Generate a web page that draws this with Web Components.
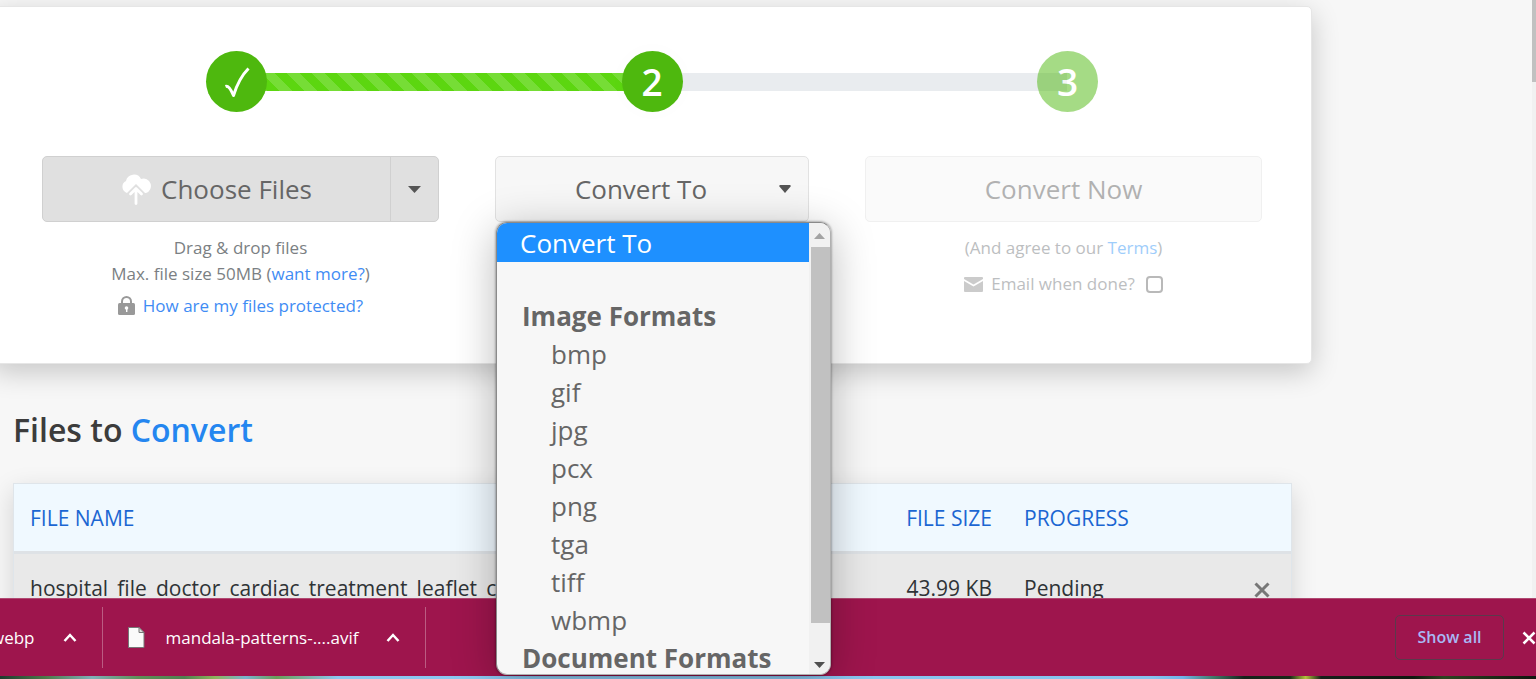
<!DOCTYPE html>
<html lang="en">
<head>
<meta charset="utf-8">
<title>File conversion</title>
<style>
  html, body { margin: 0; height: 100%; overflow: hidden; }
  body { background: #f7f7f7; font-family: "Open Sans", "Noto Sans", sans-serif; color: #333; }
</style>
</head>
<body>
<app-window>
  <convert-card>
    <progress-steps></progress-steps>
    <choose-files></choose-files>
    <format-picker></format-picker>
    <convert-now></convert-now>
  </convert-card>
  <file-list></file-list>
  <download-shelf slot="shelf">
    <download-item first>webp</download-item>
    <download-item>mandala-patterns-....avif</download-item>
  </download-shelf>
</app-window>

<script>
const define = (name, html) => customElements.define(name, class extends HTMLElement {
  constructor() {
    super();
    this.attachShadow({ mode: "open" }).innerHTML = html;
  }
});

define("app-window", `
<style>
  :host { display: flex; flex-direction: column; height: 100vh; }
  .view { flex: 1; min-height: 0; display: flex; }
  main { flex: 1; min-width: 0; padding: 6px 220px 0 0; }
  .track { width: 4px; background: #f1f1f1; }
  .thumb { height: 82px; background: #c1c1c1; }
  .desk { position: relative; z-index: 2; height: 3px; flex: none;
    background: linear-gradient(90deg, #1d3a2e 0, #4d7a4a 3%, #7fb0b8 6%, #5d8f57 9%, #4f8050 12%, #8fb45c 14%, #78b4cf 16%, #6a9d58 18%, #8cc8f0 22%, #86c4ee 75%, #6fb5e8 77%, #3f7a68 79%, #14221a 81%, #1a2a18 84%, #b3c23c 85%, #16201a 86%, #10180f 92%, #2c4420 94%, #0f160e 100%); }
</style>
<div class="view"><main><slot></slot></main><div class="track"><div class="thumb"></div></div></div>
<slot name="shelf"></slot>
<div class="desk"></div>`);

define("convert-card", `
<style>
  :host { display: grid; grid-template-columns: 397fr 314fr 397fr; column-gap: 56px; align-items: start; align-content: start;
    box-sizing: border-box; min-height: 358px; margin-left: -8px; padding: 44px 49px 0; background: #fff;
    border: 1px solid #e6e6e6; border-radius: 5px; box-shadow: 0 8px 28px rgba(0,0,0,.2); }
  ::slotted(progress-steps) { grid-column: 1 / -1; margin-bottom: 44px; }
</style>
<slot></slot>`);

define("progress-steps", `
<style>
  :host { display: flex; align-items: center; padding: 0 164px; }
  .dot { position: relative; z-index: 1; flex: none; width: 61px; height: 61px; border-radius: 50%; background: #4eb80e;
    color: #fff; font-size: 37px; font-weight: 600; display: grid; place-items: center; line-height: 61px; }
  .halo { box-shadow: 0 0 20px rgba(0,0,0,.02); }
  .todo { opacity: .5; }
  .bar { flex: 1; height: 18px; margin: 0 -30px; background: #e9ecef; }
  .full { background: linear-gradient(45deg, rgba(255,255,255,.16) 25%, transparent 25% 50%, rgba(255,255,255,.16) 50% 75%, transparent 75%) 0 0 / 25px 25px #5cd610; }
</style>
<div class="dot"><svg width="26" height="32" viewBox="0 0 26 32" fill="none" stroke="#fff" stroke-width="3" stroke-linejoin="round" aria-label="Done"><path d="M1.500 20.500Q5 19 9.500 29.500Q15 12 24.500 2.500"/></svg></div>
<div class="bar full"></div>
<div class="dot halo">2</div>
<div class="bar"></div>
<div class="dot todo">3</div>`);

define("choose-files", `
<style>
  :host { display: block; text-align: center; font-size: 17px; line-height: 26px; color: #7b7f83; }
  .group { display: flex; box-sizing: border-box; height: 66px; border: 1px solid #d0d0d0; border-radius: 5px; background: #e0e0e0; margin-bottom: 13px; }
  button { font: inherit; font-size: 26px; color: #666; border: 0; background: none; padding: 0; display: flex; align-items: center; justify-content: center; }
  .main { flex: 1; gap: 10px; }
  .more { width: 48px; border-left: 1px solid #d0d0d0; }
  p { margin: 0; }
  .safe { display: flex; justify-content: center; align-items: center; gap: 8px; margin-top: 6px; }
  a { color: #3f8cf4; text-decoration: none; }
</style>
<div class="group">
  <button class="main"><svg width="30" height="32" viewBox="0 0 30 32"><path d="M6 20A6.500 6.500 0 0 1 5 8A8 8 0 0 1 20 6A7.200 7.200 0 0 1 25 20Z" fill="#fff"/><path d="M6.500 22V19.500L15 11L23.500 19.500V22Z" fill="#e0e0e0"/><path d="M15 30.500V16M9.500 21L15 15.500L20.500 21" fill="none" stroke="#fff" stroke-width="2.800" stroke-linecap="round" stroke-linejoin="round"/></svg>Choose Files</button>
  <button class="more" aria-label="More sources"><svg width="13" height="7" viewBox="0 0 13 7"><path d="M0 0H13L6.500 7Z" fill="#555"/></svg></button>
</div>
<p>Drag &amp; drop files</p>
<p>Max. file size 50MB (<a href="#more">want more?</a>)</p>
<p class="safe"><svg width="17" height="20" viewBox="0 0 17 20"><path d="M4 9V5.500a4.500 4.500 0 0 1 9 0V9" fill="none" stroke="#999" stroke-width="2"/><rect y="7" width="17" height="12" rx="1.500" fill="#999"/><circle cx="8.500" cy="12" r="1.800" fill="#fff"/><path d="M8 12h1.400v4H8z" fill="#fff"/></svg><a href="#safe">How are my files protected?</a></p>`);

define("format-picker", `
<style>
  :host { display: block; position: relative; font-size: 26px; color: #666; }
  .box { display: grid; grid-template: 66px / 1fr; align-items: center; }
  select, .box svg { grid-area: 1 / 1; }
  select { appearance: none; width: 100%; height: 66px; border: 1px solid #e2e2e2; border-radius: 5px; background: #f7f7f7;
    font: inherit; color: inherit; padding: 0 22px 0 0; text-align: center; text-align-last: center; }
  .box svg { justify-self: end; margin-right: 18px; pointer-events: none; }
  .popup { position: absolute; z-index: 3; top: 66px; left: 1px; box-sizing: border-box; width: calc(100% + 21px); height: 453px;
    display: flex; overflow: hidden; background: #f7f7f7; border: 1px solid; border-color: #8a8a8a #b0b0b0 #b0b0b0 #8a8a8a; border-radius: 11px; }
  .shade { position: absolute; z-index: 3; top: 66px; left: 1px; width: calc(100% + 21px); height: 453px; border-radius: 11px;
    box-shadow: 0 0 2px 1px rgba(0,0,0,.25), 0 8px 44px rgba(0,0,0,.28); }
  ul { flex: 1; margin: 0; padding: 0; list-style: none; line-height: 38px; }
  li { padding-left: 54px; }
  .on { padding: 1px 0 0 23px; background: #1e90ff; color: #fff; }
  .gap { height: 35px; }
  .head { padding-left: 25px; font-weight: 700; }
  .scroll { width: 21px; display: flex; flex-direction: column; align-items: center; background: #f1f1f1; }
  .scroll svg { flex: none; margin: 10px 0 8px; }
  .thumb { width: 19px; align-self: flex-end; height: 376px; background: #c1c1c1; }
  .scroll .down { margin: auto 0 6px; }
</style>
<div class="box">
  <select aria-label="Convert To"><option>Convert To</option></select>
  <svg width="12" height="8" viewBox="0 0 12 8"><path d="M1 0H11L12 1L6 8L0 1Z" fill="#555"/></svg>
</div>
<div class="shade"></div>
<div class="popup">
  <ul role="listbox" aria-label="Formats">
    <li class="on" role="option" aria-selected="true">Convert To</li>
    <li class="gap" role="presentation"></li>
    <li class="head" role="presentation">Image Formats</li>
    <li role="option">bmp</li><li role="option">gif</li><li role="option">jpg</li><li role="option">pcx</li>
    <li role="option">png</li><li role="option">tga</li><li role="option">tiff</li><li role="option">wbmp</li>
    <li class="head" role="presentation">Document Formats</li>
  </ul>
  <div class="scroll">
    <svg width="11" height="6" viewBox="0 0 11 6"><path d="M0 6H11L5.500 0Z" fill="#a3a3a3"/></svg>
    <div class="thumb"></div>
    <svg class="down" width="11" height="6" viewBox="0 0 11 6"><path d="M0 0H11L5.500 6Z" fill="#505050"/></svg>
  </div>
</div>`);

define("convert-now", `
<style>
  :host { display: block; text-align: center; font-size: 17px; line-height: 26px; color: #7b7f83; opacity: .5; }
  button { display: block; width: 100%; height: 66px; margin-bottom: 13px; border: 1px solid #e2e2e2; border-radius: 5px; background: #f7f7f7; font: inherit; font-size: 26px; color: #666; }
  p { margin: 0; }
  a { color: #3f9cf8; text-decoration: none; }
  label { display: flex; justify-content: center; align-items: center; gap: 8px; margin-top: 10px; }
  input { appearance: none; box-sizing: border-box; width: 17px; height: 17px; margin: 0 0 0 3px; border: 2px solid #767676; border-radius: 4px; background: #fff; }
</style>
<button>Convert Now</button>
<p>(And agree to our <a href="#terms">Terms</a>)</p>
<label><svg width="19" height="15" viewBox="0 0 19 15"><path d="M1 0H18Q19 0 19 1V2L9.500 7.500L0 2V1Q0 0 1 0Z" fill="#999"/><path d="M0 4L9.500 9.500L19 4V14Q19 15 18 15H1Q0 15 0 14Z" fill="#999"/></svg>Email when done?<input type="checkbox"></label>`);

define("file-list", `
<style>
  :host { display: block; padding: 41px 20px 0 13px; font-size: 21px; }
  h2 { margin: 0 0 28px; font-size: 32px; line-height: 50px; font-weight: 600; color: #3c3c3c; }
  h2 span { color: #2486f0; }
  table { width: 100%; table-layout: fixed; border-collapse: separate; border-spacing: 0; border: 1px solid #dfe5ea; box-shadow: 0 8px 24px rgba(0,0,0,.15); }
  th { height: 66px; padding: 1px 16px 0; text-align: left; font-weight: 400; color: #1b66d2; background: #f0f9ff; border-bottom: 3px solid #dee2e6; }
  td { height: 68px; padding: 0 16px; background: #e9e9e9; color: #2f3336; white-space: nowrap; }
  .size { width: 142px; text-align: right; }
  .prog { width: 192px; }
  .del { width: 27px; }
  button { border: 0; background: none; padding: 0; display: block; margin: 6px 0 0 6px; }
</style>
<h2>Files to <span>Convert</span></h2>
<table>
  <thead><tr><th>FILE NAME</th><th class="size">FILE SIZE</th><th class="prog">PROGRESS</th><th class="del"></th></tr></thead>
  <tbody><tr><td>hospital_file_doctor_cardiac_treatment_leaflet_co</td><td class="size">43.99 KB</td><td>Pending</td>
  <td><button aria-label="Remove"><svg width="16" height="16" viewBox="0 0 16 16" fill="none" stroke="#777" stroke-width="3"><path d="M1.500 1.500L14.500 14.500M14.500 1.500L1.500 14.500"/></svg></button></td></tr></tbody>
</table>`);

define("download-shelf", `
<style>
  :host { position: relative; z-index: 2; flex: none; display: flex; align-items: center; box-sizing: border-box; height: 78px;
    background: #9e154d; border-top: 1px solid #b04a72; overflow: hidden; }
  .all { margin-left: auto; width: 109px; height: 45px; box-sizing: border-box; border: 1px solid #5a3a4c; border-radius: 5px; background: none; font: inherit; font-size: 16px; font-weight: 600; color: #a9b8f4; padding: 0 0 2px; }
  .x { width: 14px; height: 14px; margin: 0 0 0 18px; border: 0; padding: 0; background: none; overflow: hidden; display: block; }
</style>
<slot></slot>
<button class="all">Show all</button>
<button class="x" aria-label="Close"><svg width="14" height="14" viewBox="0 0 14 14" fill="none" stroke="#fff" stroke-width="2.500"><path d="M1.500 1.500L12.500 12.500M12.500 1.500L1.500 12.500"/></svg></button>`);

define("download-item", `
<style>
  :host { display: flex; align-items: center; height: 61px; padding: 0 25px; border-right: 1px solid #bb5c82; font-size: 17px; color: #fff; white-space: nowrap; }
  :host([first]) { margin-left: -9px; padding-left: 0; }
  :host([first]) .doc { display: none; }
  .doc { margin-right: 21px; }
  button { border: 0; background: none; padding: 0; display: flex; margin-left: 28px; }
</style>
<svg class="doc" width="17" height="21" viewBox="0 0 17 21"><path d="M.5 .5H11L16 5.500V20.500H.5Z" fill="#fafafa" stroke="#777"/><path d="M11 .5V5.500H16Z" fill="#ddd" stroke="#777"/></svg>
<slot></slot>
<button aria-label="Options"><svg width="14" height="9" viewBox="0 0 14 9" fill="none" stroke="#fff" stroke-width="2.500"><path d="M1.500 8L7 2L12.500 8"/></svg></button>`);
</script>
</body>
</html>
